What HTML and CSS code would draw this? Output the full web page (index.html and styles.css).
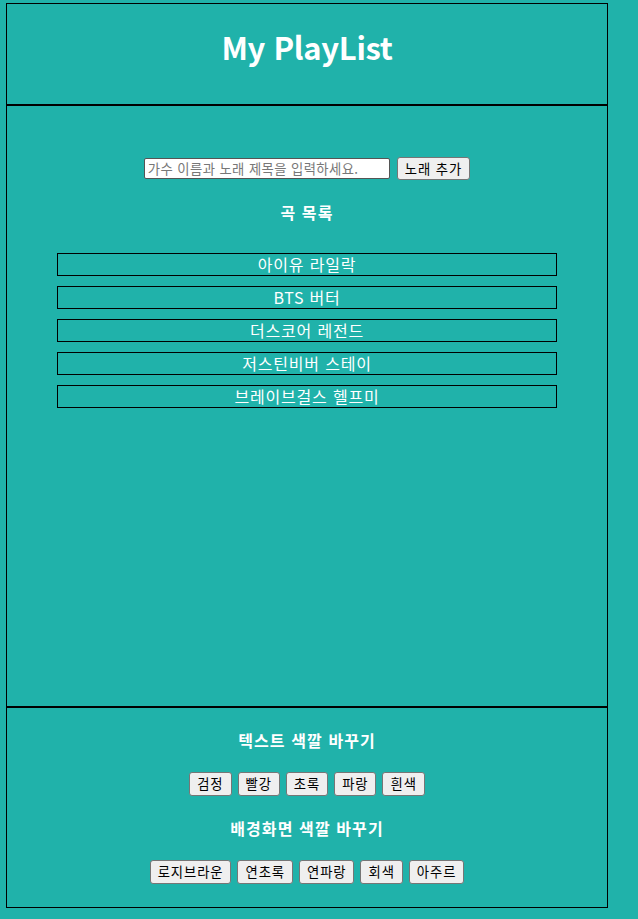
FILE: index.html
```html
<!DOCTYPE html>
<html lang="ko">
<head>
<meta charset="utf-8">
<title>My PlayList</title>
<link rel="stylesheet" href="styles.css">
</head>
<body>
<div class="page">
  <header class="header">
    <h1 class="title">My PlayList</h1>
  </header>
  <main class="main">
    <div class="form-row">
      <input class="song-input" type="text" placeholder="가수 이름과 노래 제목을 입력하세요.">
      <button class="btn">노래 추가</button>
    </div>
    <h3 class="subtitle">곡 목록</h3>
    <ul class="song-list">
      <li class="song">아이유 라일락</li>
      <li class="song">BTS 버터</li>
      <li class="song">더스코어 레전드</li>
      <li class="song">저스틴비버 스테이</li>
      <li class="song">브레이브걸스 헬프미</li>
    </ul>
  </main>
  <footer class="footer">
    <h3 class="subtitle">텍스트 색깔 바꾸기</h3>
    <div class="btn-row">
      <button class="btn btn-lg">검정</button>
      <button class="btn btn-lg">빨강</button>
      <button class="btn btn-lg">초록</button>
      <button class="btn btn-lg">파랑</button>
      <button class="btn btn-lg">흰색</button>
    </div>
    <h3 class="subtitle">배경화면 색깔 바꾸기</h3>
    <div class="btn-row">
      <button class="btn btn-lg">로지브라운</button>
      <button class="btn btn-lg">연초록</button>
      <button class="btn btn-lg">연파랑</button>
      <button class="btn btn-lg">회색</button>
      <button class="btn btn-lg">아주르</button>
    </div>
  </footer>
</div>
</body>
</html>
```
FILE: styles.css
```css
html, body {
  margin: 0;
  padding: 0;
  background: #20b2aa;
}
body {
  padding: 3px 0 0 6px;
  font-family: "Noto Sans CJK KR", "Noto Sans", sans-serif;
  color: #fff;
}
.page {
  width: 602px;
}
.header {
  border: 1px solid #000;
  height: 100px;
  box-sizing: content-box;
  padding: 0;
}
.title {
  margin: 0;
  padding-top: 23px;
  font-size: 31px;
  line-height: 40px;
  font-weight: 700;
  text-align: center;
  letter-spacing: -0.3px;
}
.main {
  border: 1px solid #000;
  padding-top: 51px;
  box-sizing: border-box;
  height: 602px;
  display: flex;
  flex-direction: column;
  align-items: center;
}
.form-row {
  display: flex;
  align-items: flex-end;
  gap: 7px;
  height: 23px;
}
.song-input {
  width: 246px;
  height: 21px;
  box-sizing: border-box;
  border: 1px solid #555;
  border-radius: 2px;
  padding: 0 3px;
  font-family: "Noto Sans CJK KR", sans-serif;
  font-size: 13.33px;
  letter-spacing: 0.4px;
  color: #000;
  background: #fff;
  margin-bottom: 1px;
}
.song-input::placeholder {
  color: #777;
}
.btn {
  height: 23px;
  box-sizing: border-box;
  border: 1px solid #767676;
  border-radius: 3px;
  background: #efefef;
  padding: 0 7px;
  font-family: "Noto Sans CJK KR", sans-serif;
  font-size: 13.33px;
  line-height: 20px;
  letter-spacing: 0.9px;
  color: #000;
}
.btn-lg {
  height: 24px;
}
.subtitle {
  margin: 0;
  font-size: 16px;
  line-height: 20px;
  font-weight: 700;
  text-align: center;
  letter-spacing: 1.1px;
}
.main .subtitle {
  margin-top: 22px;
}
.song-list {
  list-style: none;
  margin: 31px 0 0;
  padding: 0;
  width: 500px;
  display: flex;
  flex-direction: column;
  gap: 10px;
}
.song {
  border: 1px solid #000;
  height: 23px;
  box-sizing: border-box;
  text-align: center;
  font-size: 16px;
  line-height: 20px;
  letter-spacing: 0.8px;
}
.footer {
  border: 1px solid #000;
  padding: 22px 0 23px;
  display: flex;
  flex-direction: column;
  align-items: center;
  gap: 22px;
}
.btn-row {
  display: flex;
  gap: 6px;
}
```
